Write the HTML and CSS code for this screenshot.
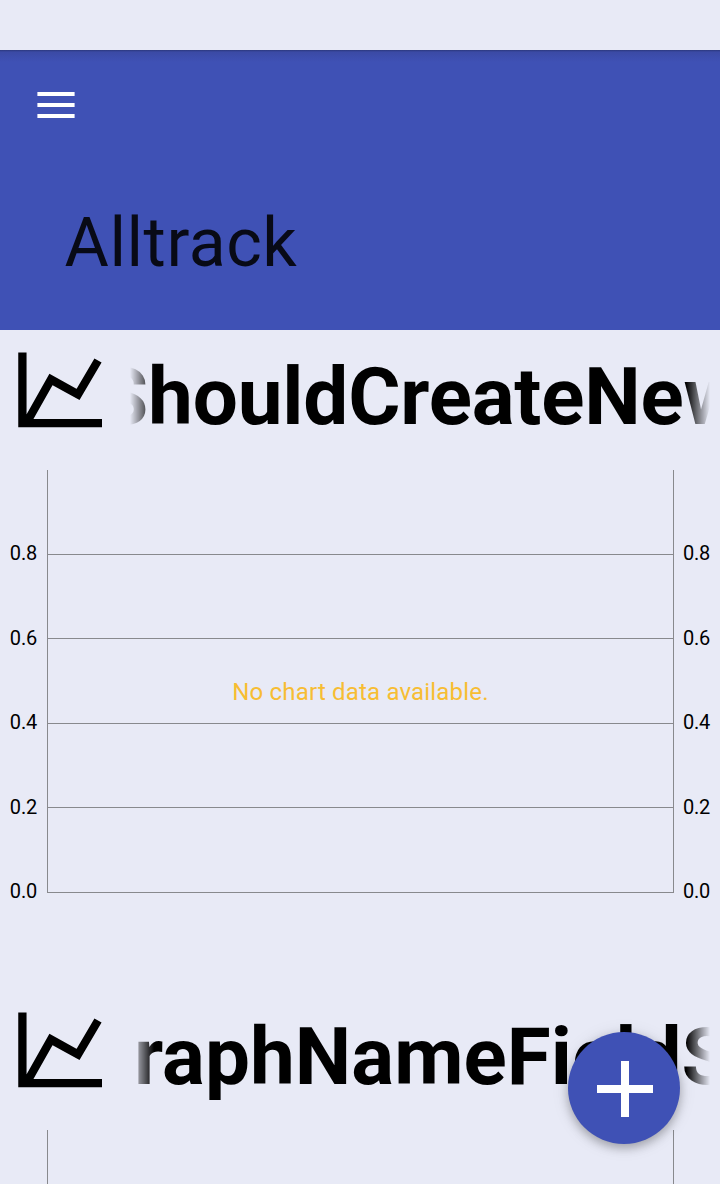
FILE: index.html
```html
<!DOCTYPE html>
<html lang="en">
<head>
<meta charset="utf-8">
<title>Alltrack</title>
<link rel="stylesheet" href="styles.css">
</head>
<body>
<div class="status"></div>
<header class="appbar">
  <svg class="menu" viewBox="0 0 38 26"><path d="M.4 0h37.200v4H.4zM.4 11h37.200v4H.4zM.4 22h37.200v4H.4z" fill="#fff"/></svg>
  <h1 class="title">Alltrack</h1>
</header>
<main>
  <section class="card">
    <div class="head">
      <svg class="icon" viewBox="0 0 84 76"><path d="M4.400 .4V71.200H84M9 70L33 27.500L60 42.500L80 8.500" fill="none" stroke="#000" stroke-width="8.300"/></svg>
      <div class="marquee"><span class="name first">ShouldCreateNew</span></div>
    </div>
    <div class="chart">
      <div class="axis"><span>0.8</span><span>0.6</span><span>0.4</span><span>0.2</span><span>0.0</span></div>
      <div class="plot"><div class="band"></div><div class="band"></div><div class="band"><p class="empty">No chart data available.</p></div><div class="band"></div><div class="band"></div></div>
      <div class="axis right"><span>0.8</span><span>0.6</span><span>0.4</span><span>0.2</span><span>0.0</span></div>
    </div>
  </section>
  <section class="card last">
    <div class="head">
      <svg class="icon" viewBox="0 0 84 76"><path d="M4.400 .4V71.200H84M9 70L33 27.500L60 42.500L80 8.500" fill="none" stroke="#000" stroke-width="8.300"/></svg>
      <div class="marquee"><span class="name second">raphNameFieldS</span></div>
    </div>
    <div class="chart">
      <div class="axis"></div><div class="plot"></div><div class="axis right"></div>
    </div>
  </section>
</main>
<button class="fab" aria-label="Add"><svg viewBox="0 0 56 56"><path d="M24 0h8v24h24v8H32v24h-8V32H0v-8h24z" fill="#fff"/></svg></button>
</body>
</html>
```
FILE: styles.css
```css
* { box-sizing: border-box; }
body { margin: 0; height: 1184px; overflow: hidden; background: #e8eaf6; color: #000; font-family: Roboto, sans-serif; position: relative; }
.status { height: 50px; }
.appbar { height: 280px; background: linear-gradient(#2c387e 0, #3b4aa5 2px, #3f51b5 12px); padding: 42px 0 0 37px; }
.menu { display: block; width: 38px; height: 26px; }
.title { margin: 85px 0 0 27.500px; font-size: 68px; line-height: 80px; font-weight: 400; letter-spacing: .55px; color: #080a16; }
.card { height: 660px; }
.card.last { height: 194px; }
.head { height: 140px; display: flex; padding: 22px 10px 0 18px; }
.icon { width: 84px; height: 76px; flex: none; }
.marquee { margin-left: 28px; width: 580px; height: 100px; overflow: hidden; -webkit-mask-image: linear-gradient(90deg, transparent, #000 24px, #000 556px, transparent); mask-image: linear-gradient(90deg, transparent, #000 24px, #000 556px, transparent); }
.name { display: block; width: max-content; font-size: 80px; line-height: 90px; font-weight: 700; }
.first { margin-left: -31px; letter-spacing: -.18px; }
.second { margin-left: 4px; letter-spacing: .05px; }
.chart { display: flex; height: 423px; }
.last .chart { height: 54px; }
.axis { width: 47px; padding: 71px 10px 0 0; text-align: right; font-size: 20px; line-height: 24px; letter-spacing: -.2px; display: flex; flex-direction: column; gap: 60.500px; }
.axis.right { width: 46px; padding: 71px 0 0 9px; text-align: left; }
.last .axis { padding: 0; }
.plot { width: 627px; border: solid #88898d; border-width: 0 1px; display: grid; grid-template-rows: 85px 84px 85px 84px 85px; }
.last .plot { display: block; }
.band { border-bottom: 1px solid #88898d; }
.empty { margin: 38px 0 0; font-size: 24px; line-height: 30px; letter-spacing: .18px; text-align: center; color: #f7bd33; }
.fab { position: absolute; left: 568px; top: 1032px; width: 112px; height: 112px; border: 0; border-radius: 50%; background: #3f51b5; padding: 29px; box-shadow: 0 4px 10px rgba(0,0,0,.26), 0 2px 18px rgba(0,0,0,.1); }
.fab svg { display: block; width: 56px; height: 56px; }
```
